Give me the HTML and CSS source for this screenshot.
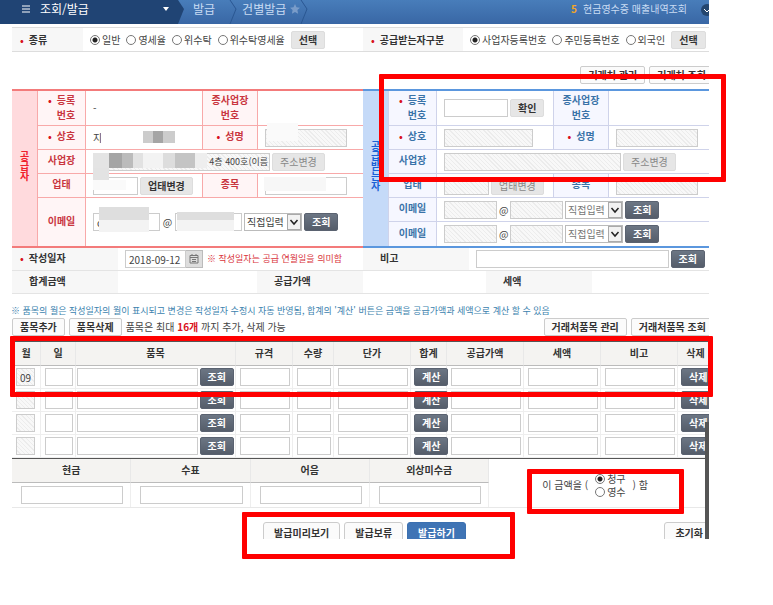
FILE: index.html
```
<!DOCTYPE html>
<html lang="ko">
    <head>
        <meta charset="UTF-8" />
        <meta name="viewport" content="width=device-width, initial-scale=1.0" />
        <title>건별발급</title>
        <link rel="stylesheet" href="styles.css">
    </head>
    <body>
        <div class="shell">
            <header class="top">
                <div class="top-menu">
                    <svg class="bars" viewBox="0 0 8 8"><path d="M0 1h8M0 4h8M0 7h8" /></svg>
                    <span>조회/발급</span>
                    <svg class="caret" viewBox="0 0 6 4"><path d="M0 0h6L3 4z" /></svg>
                </div>
                <nav class="crumbs">
                    <a href="#">발급</a>
                    <svg class="chev" viewBox="0 0 8 24"><path d="M1 0l6 9-6 15" /></svg>
                    <a href="#">건별발급</a>
                    <svg class="star" viewBox="0 0 10 10"><path d="M5 0l1.500 3.300 3.500.4-2.600 2.400.7 3.600L5 7.900 1.900 9.700l.7-3.600L0 3.700l3.500-.4z" /></svg>
                    <svg class="chev" viewBox="0 0 8 24"><path d="M1 0l6 9-6 15" /></svg>
                </nav>
                <div class="ticker">
                    <b>5</b>
                    <a href="#">현금영수증 매출내역조회</a>
                    <svg class="more" viewBox="0 0 12 12"><circle cx="6" cy="6" r="6" /><path d="M3 5l3 3 3-3" /></svg>
                </div>
            </header>

            <main class="sheet">
                <div class="filters">
                    <div class="filter">
                        <div class="filter-name short"><i>•</i>종류</div>
                        <div class="filter-body">
                            <label><input type="radio" name="kind" checked />일반</label>
                            <label><input type="radio" name="kind" />영세율</label>
                            <label><input type="radio" name="kind" />위수탁</label>
                            <label><input type="radio" name="kind" />위수탁영세율</label>
                            <button class="btn grey">선택</button>
                        </div>
                    </div>
                    <div class="filter">
                        <div class="filter-name"><i>•</i>공급받는자구분</div>
                        <div class="filter-body">
                            <label><input type="radio" name="buyer" checked />사업자등록번호</label>
                            <label><input type="radio" name="buyer" />주민등록번호</label>
                            <label><input type="radio" name="buyer" />외국인</label>
                            <button class="btn grey">선택</button>
                        </div>
                    </div>
                </div>

                <div class="partner-tools">
                    <button class="btn white">거래처 관리</button>
                    <button class="btn white">거래처 조회</button>
                </div>

                <div class="parties">
                    <!-- 공급자 -->
                    <table class="party seller">
                        <colgroup><col class="c-side" /><col class="c-name" /><col /><col class="c-name2" /><col class="c-last" /></colgroup>
                        <tr class="tall">
                            <th class="side" rowspan="5"><span>공급자</span></th>
                            <th><div class="two"><i>•</i>등록<br />번호</div></th>
                            <td>-</td>
                            <th>종사업장<br />번호</th>
                            <td></td>
                        </tr>
                        <tr>
                            <th><i>•</i>상호</th>
                            <td><div class="line">지<span class="mask m-name"></span></div></td>
                            <th><i>•</i>성명</th>
                            <td><div class="line"><input class="w-82" aria-label="공급자 성명" disabled /><span class="mask m-owner"></span></div></td>
                        </tr>
                        <tr>
                            <th>사업장</th>
                            <td colspan="3">
                                <div class="line">
                                    <input class="w-177 right" aria-label="공급자 사업장" value="00, 4층 400호(이름" disabled />
                                    <button class="btn grey" disabled>주소변경</button>
                                    <span class="mask m-addr"></span>
                                </div>
                            </td>
                        </tr>
                        <tr>
                            <th>업태</th>
                            <td>
                                <div class="line">
                                    <input class="w-45" aria-label="공급자 업태" />
                                    <button class="btn grey">업태변경</button>
                                    <span class="mask m-type"></span>
                                </div>
                            </td>
                            <th>종목</th>
                            <td><div class="line"><input class="w-82" aria-label="공급자 종목" /><span class="mask m-item"></span></div></td>
                        </tr>
                        <tr class="mail">
                            <th>이메일</th>
                            <td colspan="3">
                                <div class="line">
                                    <input class="w-67" aria-label="공급자 이메일 아이디" value="c" />
                                    <span class="at">@</span>
                                    <input class="w-67" aria-label="공급자 이메일 도메인" />
                                    <select aria-label="공급자 도메인 선택"><option>직접입력</option></select>
                                    <button class="btn dark">조회</button>
                                    <span class="mask m-id"></span>
                                    <span class="mask m-host"></span>
                                </div>
                            </td>
                        </tr>
                    </table>

                    <!-- 공급받는자 -->
                    <table class="party buyer">
                        <colgroup><col class="c-side" /><col class="c-name" /><col /><col class="c-name2" /><col class="c-last" /></colgroup>
                        <tr class="tall">
                            <th class="side" rowspan="6"><span>공급받는자</span></th>
                            <th><div class="two"><i>•</i>등록<br />번호</div></th>
                            <td><div class="line"><input class="w-64" aria-label="공급받는자 등록번호" /><button class="btn grey">확인</button></div></td>
                            <th>종사업장<br />번호</th>
                            <td></td>
                        </tr>
                        <tr>
                            <th><i>•</i>상호</th>
                            <td><input class="w-89" aria-label="공급받는자 상호" disabled /></td>
                            <th><i>•</i>성명</th>
                            <td><input class="w-82" aria-label="공급받는자 성명" disabled /></td>
                        </tr>
                        <tr>
                            <th>사업장</th>
                            <td colspan="3"><div class="line"><input class="w-177" aria-label="공급받는자 사업장" disabled /><button class="btn grey" disabled>주소변경</button></div></td>
                        </tr>
                        <tr>
                            <th>업태</th>
                            <td><div class="line"><input class="w-45" aria-label="공급받는자 업태" disabled /><button class="btn grey" disabled>업태변경</button></div></td>
                            <th>종목</th>
                            <td><input class="w-82" aria-label="공급받는자 종목" disabled /></td>
                        </tr>
                        <tr>
                            <th>이메일</th>
                            <td colspan="3">
                                <div class="line">
                                    <input class="w-53" aria-label="이메일1 아이디" disabled />
                                    <span class="at">@</span>
                                    <input class="w-53" aria-label="이메일1 도메인" disabled />
                                    <select aria-label="이메일1 도메인 선택"><option>직접입력</option></select>
                                    <button class="btn dark">조회</button>
                                </div>
                            </td>
                        </tr>
                        <tr>
                            <th>이메일</th>
                            <td colspan="3">
                                <div class="line">
                                    <input class="w-53" aria-label="이메일2 아이디" disabled />
                                    <span class="at">@</span>
                                    <input class="w-53" aria-label="이메일2 도메인" disabled />
                                    <select aria-label="이메일2 도메인 선택"><option>직접입력</option></select>
                                    <button class="btn dark">조회</button>
                                </div>
                            </td>
                        </tr>
                    </table>
                </div>

                <table class="meta">
                    <colgroup><col class="m1" /><col class="m2" /><col class="m1" /><col class="m1" /><col class="m3" /><col class="m1" /><col /></colgroup>
                    <tr>
                        <th class="req"><i>•</i><label for="date">작성일자</label></th>
                        <td colspan="2">
                            <div class="line date">
                                <input id="date" value="2018-09-12" />
                                <button class="cal" aria-label="달력">
                                    <svg viewBox="0 0 10 10"><path d="M1 1.500h8v7.500H1zM1 3.500h8M3 0v2M7 0v2M3 5.500h4M3 7.500h4" /></svg>
                                </button>
                                <span class="warn">※ 작성일자는 공급 연월일을 의미함</span>
                            </div>
                        </td>
                        <th><label for="memo">비고</label></th>
                        <td colspan="3"><div class="line memo"><input id="memo" /><button class="btn dark">조회</button></div></td>
                    </tr>
                    <tr>
                        <th>합계금액</th>
                        <td></td>
                        <th>공급가액</th>
                        <td colspan="2"></td>
                        <th>세액</th>
                        <td></td>
                    </tr>
                </table>

                <p class="note">※ 품목의 월은 작성일자의 월이 표시되고 변경은 작성일자 수정시 자동 반영됨, 합계의 '계산' 버튼은 금액을 공급가액과 세액으로 계산 할 수 있음</p>

                <div class="item-tools">
                    <button class="btn white">품목추가</button>
                    <button class="btn white">품목삭제</button>
                    <span>품목은 최대 <b>16개</b> 까지 추가, 삭제 가능</span>
                    <button class="btn white push">거래처품목 관리</button>
                    <button class="btn white">거래처품목 조회</button>
                </div>

                <table class="items">
                    <colgroup>
                        <col class="i-month" /><col class="i-day" /><col /><col class="i-size" /><col class="i-qty" /><col class="i-price" />
                        <col class="i-btn" /><col class="i-sum" /><col class="i-sum" /><col class="i-sum" /><col class="i-btn" />
                    </colgroup>
                    <thead>
                        <tr><th>월</th><th>일</th><th>품목</th><th>규격</th><th>수량</th><th>단가</th><th>합계</th><th>공급가액</th><th>세액</th><th>비고</th><th>삭제</th></tr>
                    </thead>
                    <tbody>
                        <tr>
                            <td><input aria-label="월" value="09" disabled /></td>
                            <td><input aria-label="일" /></td>
                            <td><div class="line"><input aria-label="품목" /><button class="btn dark">조회</button></div></td>
                            <td><input aria-label="규격" /></td>
                            <td><input aria-label="수량" /></td>
                            <td><input aria-label="단가" /></td>
                            <td class="act"><button class="btn dark">계산</button></td>
                            <td><input aria-label="공급가액" /></td>
                            <td><input aria-label="세액" /></td>
                            <td><input aria-label="비고" /></td>
                            <td class="act"><button class="btn dark">삭제</button></td>
                        </tr>
                        <tr>
                            <td><input aria-label="월" disabled /></td>
                            <td><input aria-label="일" /></td>
                            <td><div class="line"><input aria-label="품목" /><button class="btn dark">조회</button></div></td>
                            <td><input aria-label="규격" /></td>
                            <td><input aria-label="수량" /></td>
                            <td><input aria-label="단가" /></td>
                            <td class="act"><button class="btn dark">계산</button></td>
                            <td><input aria-label="공급가액" /></td>
                            <td><input aria-label="세액" /></td>
                            <td><input aria-label="비고" /></td>
                            <td class="act"><button class="btn dark">삭제</button></td>
                        </tr>
                        <tr>
                            <td><input aria-label="월" disabled /></td>
                            <td><input aria-label="일" /></td>
                            <td><div class="line"><input aria-label="품목" /><button class="btn dark">조회</button></div></td>
                            <td><input aria-label="규격" /></td>
                            <td><input aria-label="수량" /></td>
                            <td><input aria-label="단가" /></td>
                            <td class="act"><button class="btn dark">계산</button></td>
                            <td><input aria-label="공급가액" /></td>
                            <td><input aria-label="세액" /></td>
                            <td><input aria-label="비고" /></td>
                            <td class="act"><button class="btn dark">삭제</button></td>
                        </tr>
                        <tr>
                            <td><input aria-label="월" disabled /></td>
                            <td><input aria-label="일" /></td>
                            <td><div class="line"><input aria-label="품목" /><button class="btn dark">조회</button></div></td>
                            <td><input aria-label="규격" /></td>
                            <td><input aria-label="수량" /></td>
                            <td><input aria-label="단가" /></td>
                            <td class="act"><button class="btn dark">계산</button></td>
                            <td><input aria-label="공급가액" /></td>
                            <td><input aria-label="세액" /></td>
                            <td><input aria-label="비고" /></td>
                            <td class="act"><button class="btn dark">삭제</button></td>
                        </tr>
                    </tbody>
                </table>

                <table class="pay">
                    <tr>
                        <th><label for="cash">현금</label></th>
                        <th><label for="check">수표</label></th>
                        <th><label for="bill">어음</label></th>
                        <th><label for="credit">외상미수금</label></th>
                        <td class="claim" rowspan="2">
                            <div class="claim-row">
                                <span>이 금액을 (</span>
                                <div class="claim-pick">
                                    <label><input type="radio" name="claim" checked />청구</label>
                                    <label><input type="radio" name="claim" />영수</label>
                                </div>
                                <span>) 함</span>
                            </div>
                        </td>
                    </tr>
                    <tr>
                        <td><input id="cash" type="text" /></td>
                        <td><input id="check" type="text" /></td>
                        <td><input id="bill" type="text" /></td>
                        <td><input id="credit" type="text" /></td>
                    </tr>
                </table>

                <div class="submit">
                    <button class="btn white big">발급미리보기</button>
                    <button class="btn white big">발급보류</button>
                    <button class="btn blue big">발급하기</button>
                    <button class="btn white big reset">초기화</button>
                </div>
            </main>
            <div class="scroll"></div>
        </div>

        <div class="mark mark-buyer"></div>
        <div class="mark mark-items"></div>
        <div class="mark mark-claim"></div>
        <div class="mark mark-submit"></div>
    </body>
</html>
```
FILE: styles.css
```
* {
    box-sizing: border-box;
}
body {
    position: relative;
    margin: 0;
    min-height: 100vh;
    background: #fff;
    color: #444;
    font: 10px/12px "Noto Sans CJK KR", sans-serif;
}
.shell {
    position: relative;
    height: calc(100vh - 66px);
    margin-right: 64px;
    overflow: hidden;
}
a {
    color: inherit;
    text-decoration: none;
}
i {
    color: #d9121c;
    font-style: normal;
    font-weight: bold;
    margin-right: 5px;
}
table {
    width: 100%;
    table-layout: fixed;
    border-collapse: separate;
    border-spacing: 0;
}
th, td {
    padding: 0;
}

/* header */
.top {
    display: flex;
    height: 24px;
    background: linear-gradient(#487dba, #3967a5);
    color: #c9dcf3;
    font-size: 12px;
    line-height: 18px;
}
.top-menu {
    display: flex;
    align-items: center;
    gap: 10px;
    width: 184px;
    padding: 0 15px 6px 22px;
    background: #204474;
    color: #fff;
    clip-path: polygon(0 0, 178px 0, 184px 9px, 178px 100%, 0 100%);
}
.bars {
    width: 8px;
    height: 8px;
    stroke: #fff;
}
.caret {
    width: 6px;
    height: 4px;
    margin-left: auto;
    fill: #fff;
}
.crumbs {
    display: flex;
    padding-left: 9px;
}
.crumbs .chev {
    width: 8px;
    height: 24px;
    margin: 0 5px 0 14px;
    fill: none;
    stroke: #2a5792;
}
.star {
    width: 10px;
    height: 10px;
    margin: 4px 0 0 4px;
    fill: #7a9cc9;
}
.crumbs .star + .chev {
    margin-left: 0;
}
.ticker {
    display: flex;
    gap: 6px;
    margin-left: auto;
    font-size: 10px;
}
.ticker b {
    color: #f5a623;
}
.more {
    width: 12px;
    height: 12px;
    margin: 4px -4px 0 8px;
    fill: #24466f;
    stroke: #fff;
}
.more circle {
    stroke: none;
}

/* the sheet runs a little past the right edge */
.sheet {
    width: calc(100% + 5px);
    padding: 3px 0 0 12px;
}

/* controls */
input, select, button {
    margin: 0;
    font: inherit;
    color: #444;
}
input {
    height: 18px;
    min-width: 0;
    padding: 0 3px;
    border: 1px solid #ccc;
    background: #fff;
}
input:disabled {
    background: repeating-linear-gradient(45deg, #f8f8f8 0 2px, #ececec 2px 3px);
}
input[type="radio"] {
    appearance: none;
    flex: none;
    width: 10px;
    height: 10px;
    padding: 0;
    border: 1px solid #777;
    border-radius: 50%;
}
input[type="radio"]:checked {
    background: radial-gradient(circle, #222 0 2px, #fff 3px);
}
.right { text-align: right; padding: 0 1px; font-size: 9px; }
.w-45 { width: 45px; }
.w-53 { width: 53px; }
.w-64 { width: 64px; }
.w-67 { width: 67px; }
.w-82 { width: 82px; }
.w-89 { width: 89px; }
.w-177 { width: 177px; }
select {
    appearance: none;
    width: 58px;
    height: 18px;
    padding: 0 2px;
    border: 1px solid #bbb;
    border-radius: 0;
    background: #fff url("data:image/svg+xml,%3Csvg xmlns='http://www.w3.org/2000/svg' width='14' height='16'%3E%3Crect x='.5' y='.5' width='13' height='15' fill='%23f2f2f2' stroke='%23aaa'/%3E%3Cpath d='M3.500 6l3.500 4 3.500-4' fill='none' stroke='%23222' stroke-width='1.500'/%3E%3C/svg%3E") right center no-repeat;
}
.buyer select {
    color: #777;
}
.btn {
    flex: none;
    height: 18px;
    padding: 0 7px;
    border: 1px solid #ddd;
    border-radius: 2px;
    background: #e6e6e6;
    color: #333;
    font-weight: bold;
    white-space: nowrap;
}
.btn:disabled {
    color: #888;
    font-weight: normal;
}
.btn.dark {
    border-color: #5a6270;
    background: linear-gradient(#6c7684, #555d6a);
    color: #fff;
}
.btn.white {
    border-color: #ccc;
    background: #fbfbfb;
}
.line {
    position: relative;
    display: flex;
    align-items: center;
    gap: 2px;
}
.at {
    width: 11px;
    text-align: center;
}
.buyer .at {
    width: 9px;
}

/* filter row */
.filters {
    display: flex;
    height: 25px;
    border-top: 1px solid #ddd;
    border-bottom: 1px solid #ddd;
}
.filter {
    display: flex;
    flex: 1;
}
.filter-name {
    display: flex;
    align-items: center;
    width: 100px;
    padding-left: 8px;
    background: #f7f7f7;
    color: #333;
    font-weight: bold;
    white-space: nowrap;
}
.filter-name.short {
    width: 71px;
}
.filter-body {
    display: flex;
    align-items: center;
    gap: 6px;
    padding-left: 7px;
    white-space: nowrap;
}
label {
    white-space: nowrap;
}
.filter-body label, .claim-pick label {
    display: flex;
    align-items: center;
    gap: 2px;
}
.partner-tools {
    display: flex;
    justify-content: flex-end;
    gap: 4px;
    padding: 14px 0 5px;
}

/* parties */
.parties {
    display: flex;
}
.party {
    --line: #f8a9a9;
    flex: 1;
    width: 50%;
    border-top: 2px solid var(--edge);
    border-bottom: 2px solid var(--edge);
}
.seller {
    --edge: #f37b7b;
    --side: #ffdadd;
    --tint: #fff5f6;
    --ink: #c9363f;
    --side-ink: #f0202c;
}
.buyer {
    --line: #cfd3ea;
    --edge: #5b97de;
    --side: #c5daf8;
    --tint: #f6f7ff;
    --ink: #3a73a8;
    --side-ink: #1c62d6;
}
.c-side { width: 25px; }
.c-name { width: 49px; }
.c-name2 { width: 56px; }
.c-last { width: 105px; }
.party tr {
    height: 24px;
}
.party .tall {
    height: 35px;
}
.party .mail {
    height: 48px;
}
.party th, .party td {
    border-bottom: 1px solid var(--line);
}
.party tr:last-child th, .party tr:last-child td, .party .side {
    border-bottom: 0;
}
.party th {
    padding-bottom: 3px;
    border-right: 1px solid var(--line);
    border-left: 1px solid var(--line);
    background: var(--tint);
    color: var(--ink);
}
.party .tall th {
    line-height: 15px;
}
.party th.side {
    border: 0;
    background: var(--side);
    color: var(--side-ink);
}
.side span {
    writing-mode: vertical-rl;
}
.party td {
    padding-left: 7px;
}
.two {
    display: inline-block;
    text-align: right;
}
.two i {
    line-height: 12px;
}

/* blurred-out values */
.mask {
    position: absolute;
    pointer-events: none;
}
.m-name {
    left: 8px;
    top: -5px;
    width: 74px;
    height: 18px;
    background: linear-gradient(90deg, #fff 42px, #ccc 42px 52px, #a5a5a5 52px 62px, #ccc 62px) 0 4px / 74px 12px no-repeat, #fff;
}
.m-owner {
    left: 2px;
    top: -6px;
    width: 31px;
    height: 18px;
    background: #fafafa;
}
.m-addr {
    left: 0;
    top: 0;
    width: 114px;
    height: 15px;
    background: linear-gradient(90deg, #e4e4e4 16px, #a5a5a5 16px 29px, #bbb 29px 40px, #e2e2e2 40px 50px, #f3f3f3 50px 70px, #ddd 70px 82px, #c4c4c4 82px 102px, #eee 102px);
}
.m-type {
    left: 0;
    top: -9px;
    width: 33px;
    height: 22px;
    background: linear-gradient(90deg, #e3e3e3 16px, transparent 16px) 0 0 / 33px 12px no-repeat, linear-gradient(#fafafa, #fafafa) 0 12px / 33px 10px no-repeat;
}
.m-item {
    left: -1px;
    top: 0;
    width: 62px;
    height: 14px;
    background: #f7f7f7;
}
.m-id {
    left: 6px;
    top: -6px;
    width: 50px;
    height: 25px;
    background: linear-gradient(#dedede 13px, #f3f3f3 13px);
}
.m-host {
    left: 84px;
    top: -1px;
    width: 57px;
    height: 19px;
    background: linear-gradient(#dedede 8px, #f3f3f3 8px);
}

/* date and totals */
.meta tr {
    height: 23px;
}
.m1 { width: 106px; }
.m2 { width: 139px; }
.m3 { width: 17px; }
.meta th {
    padding: 0 0 3px 17px;
    border-bottom: 1px solid #e4e4e4;
    background: #f7f7f7;
    color: #333;
    text-align: left;
}
.meta th.req {
    padding-left: 8px;
}
.meta td {
    padding-left: 7px;
    border-bottom: 1px solid #e4e4e4;
}
.date {
    gap: 0;
}
.date input {
    width: 61px;
}
.cal {
    width: 17px;
    height: 18px;
    padding: 3px;
    border: 1px solid #bbb;
    border-left: 0;
    background: #ddd;
}
.cal svg {
    display: block;
    width: 10px;
    height: 10px;
    fill: none;
    stroke: #777;
}
.warn {
    margin-left: 4px;
    color: #d9343c;
    font-size: 9px;
    white-space: nowrap;
}
.memo {
    padding-right: 9px;
}
.memo input {
    flex: 1;
}
.note {
    margin: 11px 0 1px -1px;
    color: #3b82ae;
    font-size: 9px;
    white-space: nowrap;
}
.item-tools {
    display: flex;
    align-items: center;
    gap: 4px;
    padding-bottom: 5px;
}
.item-tools span {
    white-space: nowrap;
}
.item-tools b {
    color: #d9121c;
}
.push {
    margin-left: auto;
}

/* items */
.i-month { width: 29px; }
.i-day { width: 35px; }
.i-size { width: 57px; }
.i-qty { width: 41px; }
.i-price { width: 77px; }
.i-btn { width: 36px; }
.i-sum { width: 77px; }
.items {
    border-top: 1px solid #555;
    border-bottom: 1px solid #555;
}
.items th, .pay th {
    height: 24px;
    padding-bottom: 2px;
    border-right: 1px solid #e8e8e8;
    border-bottom: 1px solid #bbb;
    background: #f4f3f1;
    color: #333;
}
.items td {
    height: 23px;
    padding: 0 2px 0 4px;
    border-right: 1px solid #eee;
    border-bottom: 1px solid #eee;
}
.items td:first-child {
    padding: 0 5px 0 4px;
}
.items input, .pay input[type="text"] {
    display: block;
    width: 100%;
}
.items td .line {
    margin: 0 -1px 0 -3px;
}
.items .line input {
    flex: 1;
}
.items td.act {
    padding: 0 0 0 3px;
}
.act .btn {
    display: block;
}

/* payment */
.pay {
    border-bottom: 1px solid #e8e8e8;
}
.pay th {
    width: 17%;
}
.pay td {
    height: 24px;
    padding: 0 7px 0 9px;
    border-right: 1px solid #eee;
}
.pay .claim {
    border-right: 0;
    padding: 4px 13px 0 0;
}
.claim-row, .claim-pick {
    display: flex;
}
.claim-row {
    align-items: center;
    justify-content: center;
    gap: 7px;
    white-space: nowrap;
}
.claim-pick {
    flex-direction: column;
    gap: 1px;
}
.submit {
    position: relative;
    display: flex;
    justify-content: center;
    gap: 4px;
    padding: 14px 0 0 3px;
}
.btn.big {
    height: 22px;
    padding: 0 10px;
    border-radius: 3px;
}
.btn.blue {
    border-color: #3c70b0;
    background: #3f74b5;
    color: #fff;
}
.submit .reset {
    position: absolute;
    right: 0;
}
.scroll {
    position: absolute;
    right: 0;
    bottom: 0;
    width: 4px;
    height: 117px;
    background: #555;
}

/* red boxes over the form */
.mark {
    position: absolute;
    border: 5px solid #f00;
    border-radius: 1px;
    pointer-events: none;
}
.mark-buyer {
    left: 379px;
    top: 74px;
    width: 347px;
    height: 108px;
}
.mark-items {
    left: 10px;
    top: 336px;
    width: 703px;
    height: 61px;
}
.mark-claim {
    left: 527px;
    top: 469px;
    width: 157px;
    height: 45px;
}
.mark-submit {
    left: 242px;
    top: 512px;
    width: 273px;
    height: 47px;
}
```
